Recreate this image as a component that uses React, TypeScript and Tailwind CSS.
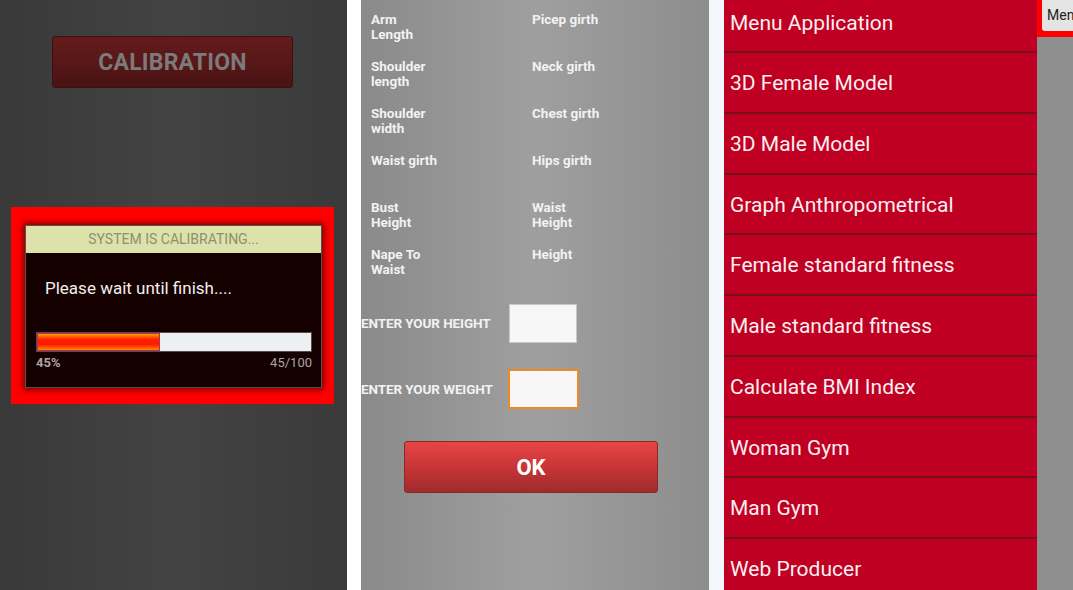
const measures: [string, string][] = [
  ["Arm\nLength", "Picep girth"],
  ["Shoulder\nlength", "Neck girth"],
  ["Shoulder\nwidth", "Chest girth"],
  ["Waist girth", "Hips girth"],
  ["Bust\nHeight", "Waist\nHeight"],
  ["Nape To\nWaist", "Height"],
];

const menuItems = [
  "3D Female Model",
  "3D Male Model",
  "Graph Anthropometrical",
  "Female standard fitness",
  "Male standard fitness",
  "Calculate BMI Index",
  "Woman Gym",
  "Man Gym",
  "Web Producer",
];

function CalibrationScreen() {
  return (
    <div className="flex h-full w-[347px] shrink-0 flex-col bg-[linear-gradient(to_right,#393939,#434343_50%,#3a3a3a)]">
      <div className="ml-[52px] mt-[36px] flex h-[52px] w-[241px] items-center justify-center rounded-[3px] border border-[#3a1010] bg-[linear-gradient(to_bottom,#651b1c,#4a1314)] pt-[3px]">
        <span className="text-[23px] font-bold tracking-[0.2px] text-[#7b7b7b]">CALIBRATION</span>
      </div>

      <div className="ml-[11px] mt-[119px] h-[197px] w-[323px] bg-[#ff0000] pl-[14px] pt-[18px]">
        <div className="flex h-[163px] w-[297px] flex-col border border-[#565050] bg-[#150000] shadow-[0_0_6px_2px_rgba(110,0,0,0.9)]">
          <div className="flex h-[27px] items-center justify-center bg-[#dce2aa] text-[14px] text-[#8d9070]">
            SYSTEM IS CALIBRATING...
          </div>
          <div className="pl-[19px] pt-[25px] text-[17px] leading-[20px] text-[#f2eeee]">
            Please wait until finish....
          </div>
          <div className="ml-[10px] mt-[34px] flex h-[20px] w-[276px] border border-[#5c4a4a]">
            <div className="h-full w-[45%] border border-[#b0305a] bg-[linear-gradient(to_bottom,#ff9c00,#ff1e00_35%,#ff1a00_65%,#ff8a00)]" />
            <div className="h-full flex-1 bg-[#edf0f3]" />
          </div>
          <div className="ml-[10px] mt-[3px] flex w-[276px] justify-between text-[13px] leading-[16px] text-[#a9a5a5]">
            <span className="font-bold">45%</span>
            <span>45/100</span>
          </div>
        </div>
      </div>
    </div>
  );
}

function MeasureScreen() {
  return (
    <div className="flex h-full w-[348px] shrink-0 flex-col bg-[linear-gradient(to_right,#8a8a8a,#9f9f9f_50%,#8d8d8d)]">
      <div className="flex flex-col pt-[12px]">
        {measures.map(([a, b], i) => (
          <div key={i} className="flex h-[47px] text-[13.5px] font-bold leading-[15px] text-[#f2f2f2]">
            <div className="w-[171px] whitespace-pre-line pl-[10px]">{a}</div>
            <div className="whitespace-pre-line">{b}</div>
          </div>
        ))}
      </div>

      <div className="mt-[10px] flex items-center">
        <span className="w-[148px] text-[13.5px] font-bold tracking-[-0.1px] text-[#f2f2f2]">ENTER YOUR HEIGHT</span>
        <div className="h-[39px] w-[68px] border border-[#c8c8c8] bg-[#f7f7f7]" />
      </div>
      <div className="mt-[26px] flex items-center">
        <span className="w-[147px] text-[13.5px] font-bold tracking-[-0.1px] text-[#f2f2f2]">ENTER YOUR WEIGHT</span>
        <div className="h-[40px] w-[71px] rounded-[2px] border-2 border-[#f08a20] bg-[#f7f7f7]" />
      </div>

      <div className="ml-[43px] mt-[32px] flex h-[52px] w-[254px] items-center justify-center rounded-[3px] border border-[#8a2828] bg-[linear-gradient(to_bottom,#e84546,#c83536_50%,#a02b2c)]">
        <span className="text-[22px] font-bold text-white">OK</span>
      </div>
    </div>
  );
}

function MenuScreen() {
  return (
    <div className="flex h-full w-[349px] shrink-0 overflow-hidden">
      <div className="flex w-[313px] shrink-0 flex-col bg-[#bf0022] text-[21px] text-[#fbeef0]">
        <div className="flex h-[53px] shrink-0 items-center border-b-2 border-[#7a0d1e] pb-[3px] pl-[6px]">
          Menu Application
        </div>
        {menuItems.map((item) => (
          <div
            key={item}
            className="flex h-[60.75px] shrink-0 items-center border-b-2 border-[#7a0d1e] pl-[6px] pt-[3px]"
          >
            {item}
          </div>
        ))}
      </div>
      <div className="flex w-[36px] shrink-0 flex-col bg-[#8f8f8f]">
        <div className="h-[37px] bg-[#ff0000] pl-[5px]">
          <div className="flex h-[31px] items-center overflow-hidden rounded-bl-[3px] bg-[#e4e4e4] pl-[5px] text-[14px] text-[#222]">
            Menu
          </div>
        </div>
      </div>
    </div>
  );
}

export default function App() {
  return (
    <div className="flex h-[590px] w-[1073px] overflow-hidden bg-white font-['Roboto',sans-serif]">
      <CalibrationScreen />
      <div className="w-[14px] shrink-0 bg-white" />
      <MeasureScreen />
      <div className="w-[15px] shrink-0 bg-[#f4f7fb]" />
      <MenuScreen />
    </div>
  );
}
